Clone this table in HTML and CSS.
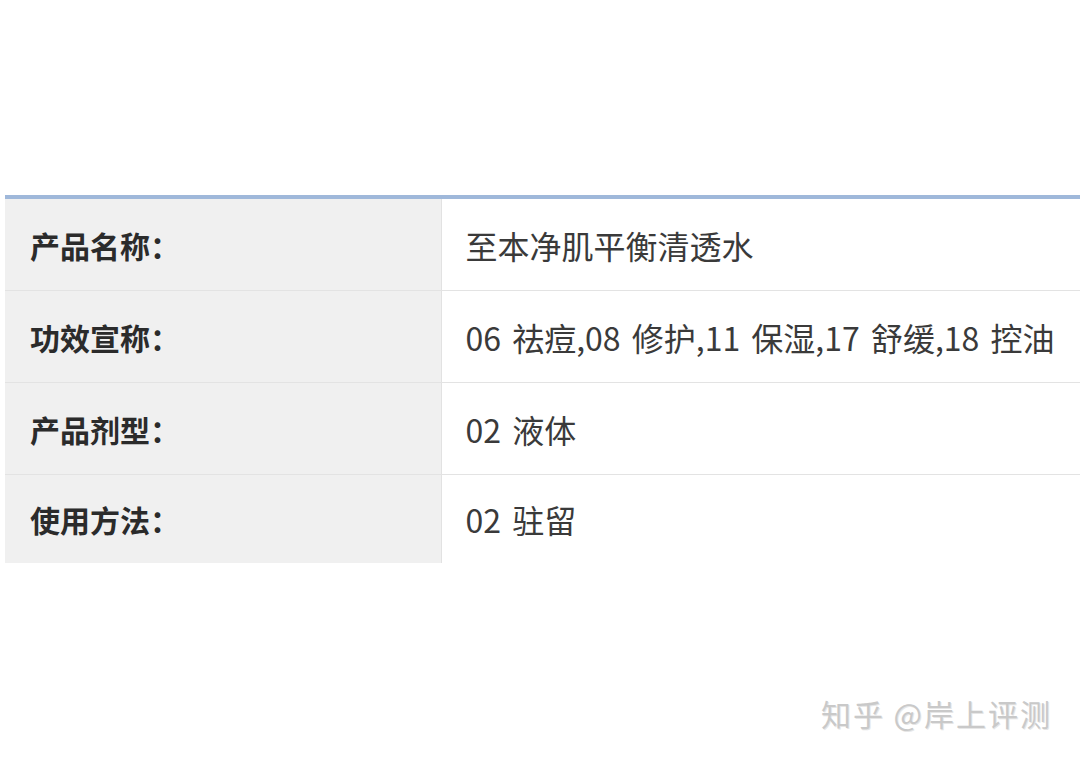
FILE: index.html
```html
<!DOCTYPE html>
<html lang="zh-CN">
<head>
  <meta charset="UTF-8">
  <title>产品信息</title>
  <link rel="stylesheet" href="styles.css">
</head>
<body>
  <div class="page">
    <table class="info-table">
      <tr>
        <th>产品名称：</th>
        <td>至本净肌平衡清透水</td>
      </tr>
      <tr>
        <th>功效宣称：</th>
        <td>06 祛痘,08 修护,11 保湿,17 舒缓,18 控油</td>
      </tr>
      <tr>
        <th>产品剂型：</th>
        <td>02 液体</td>
      </tr>
      <tr class="last">
        <th>使用方法：</th>
        <td>02 驻留</td>
      </tr>
    </table>
    <div class="watermark">知乎 @岸上评测</div>
  </div>
</body>
</html>
```

FILE: styles.css
```css
body {
  margin: 0;
  background: #fff;
  font-family: "Noto Sans CJK SC", "Noto Sans", sans-serif;
  color: #333;
  overflow: hidden;
}
.page {
  padding: 195px 0 0 5px;
}
.info-table {
  width: 1075px;
  border-collapse: collapse;
  border-top: 4px solid #9fb8da;
}
.info-table th,
.info-table td {
  height: 91px;
  padding: 0;
  border-bottom: 1px solid #e3e3e3;
  vertical-align: middle;
  text-align: left;
}
.info-table th {
  width: 436px;
  padding-left: 25px;
  box-sizing: border-box;
  background: #f0f0f0;
  border-right: 1px solid #e2e2e2;
  font-size: 30px;
  font-weight: bold;
  color: #2b2b2b;
}
.info-table td {
  padding-left: 24px;
  font-size: 32px;
  word-spacing: 4px;
  color: #3a3a3a;
}
.info-table .last th,
.info-table .last td {
  border-bottom: none;
  height: 88px;
}
.watermark {
  margin-top: 128px;
  padding-right: 28px;
  text-align: right;
  font-size: 30px;
  letter-spacing: 2px;
  color: #c9c9c9;
  text-shadow: 1px 1px 0 #e6e6e6;
}
```
